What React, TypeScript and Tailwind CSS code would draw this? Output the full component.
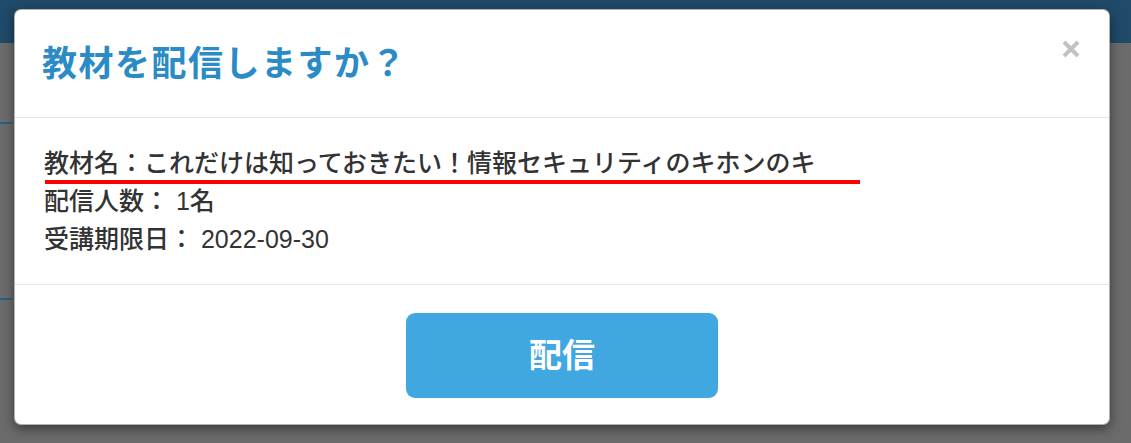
import React from "react";

type InfoRow = {
  label: string;
  value: string;
  spaced?: boolean;
};

const rows: InfoRow[] = [
  { label: "教材名：", value: "これだけは知っておきたい！情報セキュリティのキホンのキ" },
  { label: "配信人数：", value: "1名", spaced: true },
  { label: "受講期限日：", value: "2022-09-30", spaced: true },
];

function CloseIcon() {
  return (
    <svg width="20" height="18" viewBox="0 0 20 18" aria-hidden="true">
      <path d="M3 2 L17 16 M17 2 L3 16" stroke="#c2c2c2" strokeWidth="4" strokeLinecap="butt" />
    </svg>
  );
}

export default function App() {
  return (
    <div
      className="relative h-[443px] w-full overflow-hidden bg-[#6b6b6b]"
      style={{ fontFamily: '"Liberation Sans", "Noto Sans CJK JP", sans-serif' }}
    >
      {/* dimmed page behind the dialog */}
      <div className="h-[43px] w-full bg-[#1f4a69]" />
      <div className="mt-[79px] h-[2px] w-[12px] bg-[#2a5f86]" />
      <div className="mt-[174px] h-[2px] w-[12px] bg-[#2a5f86]" />

      {/* dialog */}
      <div className="absolute left-[14px] top-[9px] w-[1096px] overflow-hidden rounded-[7px] border border-black/30 bg-white shadow-[0_4px_12px_rgba(0,0,0,0.45)]">
        <div className="flex h-[108px] items-center justify-between border-b border-[#e5e5e5] pl-[27px] pr-[27px]">
          <h1 className="text-[35px] font-bold leading-none tracking-[1.5px] text-[#2b8bc6]">
            教材を配信しますか？
          </h1>
          <button type="button" className="-mt-[29px] mr-[1px]">
            <CloseIcon />
          </button>
        </div>

        <div className="border-b border-[#e5e5e5] px-[29px] pb-[26px] pt-[26px] text-[25px] font-medium leading-[38px] text-[#333333]">
          {rows.map((row, index) => (
            <div key={row.label} className="relative whitespace-nowrap">
              {row.label}
              {row.spaced ? " " : ""}
              {row.value}
              {index === 0 ? (
                <span className="absolute left-[1px] top-[36px] h-[4px] w-[815px] bg-[#ff0000]" />
              ) : null}
            </div>
          ))}
        </div>

        <div className="flex justify-center pb-[26px] pt-[28px]">
          <button
            type="button"
            className="h-[85px] w-[312px] rounded-[9px] bg-[#41a7e1] text-[33px] font-bold text-white"
          >
            配信
          </button>
        </div>
      </div>
    </div>
  );
}
